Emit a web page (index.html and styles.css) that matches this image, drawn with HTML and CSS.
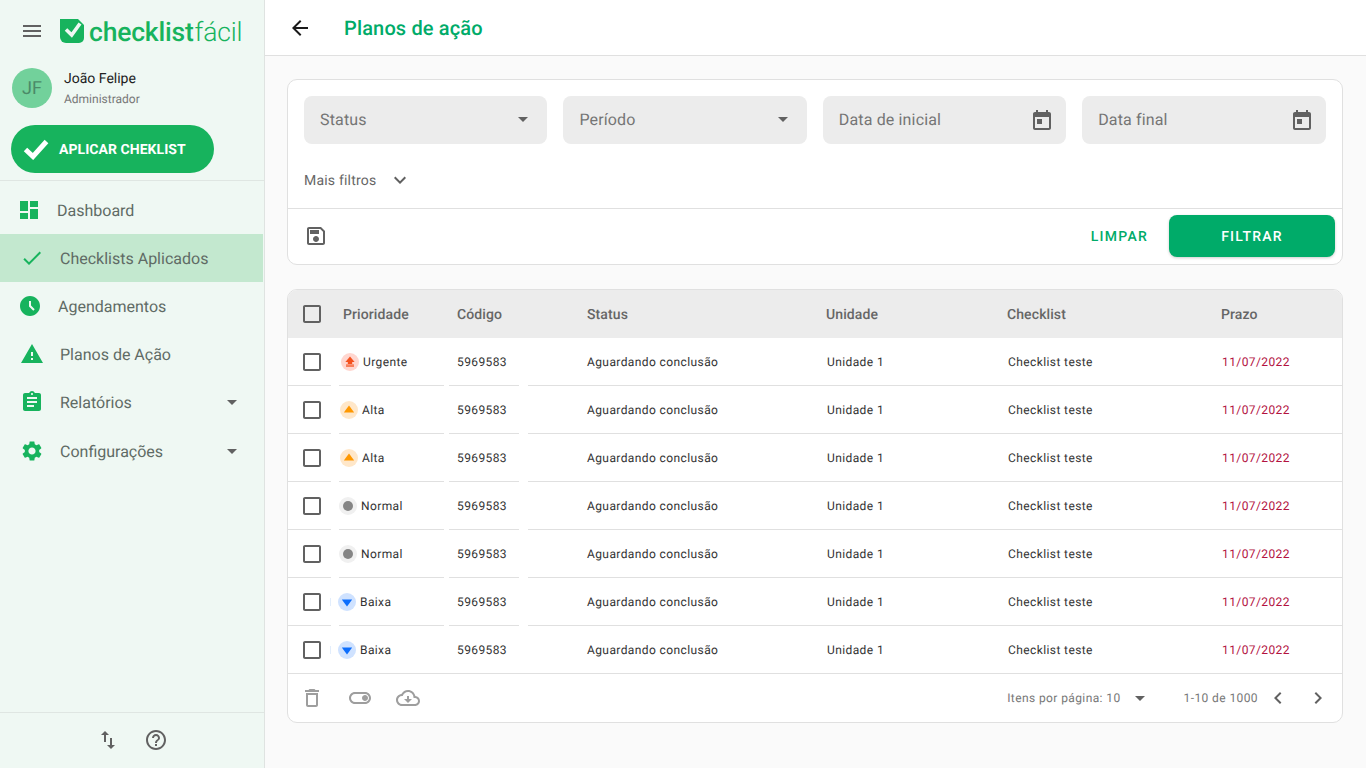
FILE: index.html
```html
<!DOCTYPE html>
<html lang="pt-BR">
<head>
<meta charset="utf-8">
<title>Planos de ação</title>
<link rel="stylesheet" href="styles.css">
</head>
<body>
<svg class="defs" aria-hidden="true">
  <symbol id="i-menu" viewBox="0 0 24 24"><path d="M3 18h18v-2H3v2zm0-5h18v-2H3v2zm0-7v2h18V6H3z"/></symbol>
  <symbol id="i-dash" viewBox="0 0 24 24"><path d="M3 13h8V3H3v10zm0 8h8v-6H3v6zm10 0h8V11h-8v10zm0-18v6h8V3h-8z"/></symbol>
  <symbol id="i-done" viewBox="0 0 24 24"><path d="M9 16.2L4.8 12l-1.4 1.4L9 19 21 7l-1.4-1.4L9 16.2z"/></symbol>
  <symbol id="i-clock" viewBox="0 0 24 24"><path d="M11.99 2C6.47 2 2 6.48 2 12s4.47 10 9.99 10C17.52 22 22 17.52 22 12S17.52 2 11.99 2zm3.3 14.71L11 12.41V7h2v4.59l3.71 3.71-1.42 1.41z"/></symbol>
  <symbol id="i-warn" viewBox="0 0 24 24"><path d="M1 21h22L12 2 1 21zm12-3h-2v-2h2v2zm0-4h-2v-4h2v4z"/></symbol>
  <symbol id="i-assign" viewBox="0 0 24 24"><path d="M19 3h-4.18C14.4 1.84 13.3 1 12 1c-1.3 0-2.4.84-2.82 2H5c-1.1 0-2 .9-2 2v14c0 1.1.9 2 2 2h14c1.1 0 2-.9 2-2V5c0-1.1-.9-2-2-2zm-7 0c.55 0 1 .45 1 1s-.45 1-1 1-1-.45-1-1 .45-1 1-1zm2 14H7v-2h7v2zm3-4H7v-2h10v2zm0-4H7V7h10v2z"/></symbol>
  <symbol id="i-gear" viewBox="0 0 24 24"><path d="M19.14 12.94c.04-.3.06-.61.06-.94 0-.32-.02-.64-.07-.94l2.03-1.58c.18-.14.23-.41.12-.61l-1.92-3.32c-.12-.22-.37-.29-.59-.22l-2.39.96c-.5-.38-1.03-.7-1.62-.94l-.36-2.54c-.04-.24-.24-.41-.48-.41h-3.84c-.24 0-.43.17-.47.41l-.36 2.54c-.59.24-1.13.57-1.62.94l-2.39-.96c-.22-.08-.47 0-.59.22L2.74 8.87c-.12.21-.08.47.12.61l2.03 1.58c-.05.3-.09.63-.09.94s.02.64.07.94l-2.03 1.58c-.18.14-.23.41-.12.61l1.92 3.32c.12.22.37.29.59.22l2.39-.96c.5.38 1.03.7 1.62.94l.36 2.54c.05.24.24.41.48.41h3.84c.24 0 .44-.17.47-.41l.36-2.54c.59-.24 1.13-.56 1.62-.94l2.39.96c.22.08.47 0 .59-.22l1.92-3.32c.12-.22.07-.47-.12-.61l-2.01-1.58zM12 15.6c-1.98 0-3.6-1.62-3.6-3.6s1.62-3.6 3.6-3.6 3.6 1.62 3.6 3.6-1.62 3.6-3.6 3.6z"/></symbol>
  <symbol id="i-caret" viewBox="0 0 24 24"><path d="M7 10l5 5 5-5z"/></symbol>
  <symbol id="i-back" viewBox="0 0 24 24"><path d="M20 11H7.83l5.59-5.59L12 4l-8 8 8 8 1.41-1.41L7.83 13H20v-2z"/></symbol>
  <symbol id="i-event" viewBox="0 0 24 24"><path d="M19 3h-1V1h-2v2H8V1H6v2H5c-1.11 0-1.99.9-1.99 2L3 19c0 1.1.89 2 2 2h14c1.1 0 2-.9 2-2V5c0-1.1-.9-2-2-2zm0 16H5V8h14v11zM7 10h5v5H7z"/></symbol>
  <symbol id="i-save" viewBox="0 0 24 24"><path d="M17 3H5c-1.11 0-2 .9-2 2v14c0 1.1.89 2 2 2h14c1.1 0 2-.9 2-2V7l-4-4zm2 16H5V5h11.17L19 7.83V19zm-7-7c-1.66 0-3 1.34-3 3s1.34 3 3 3 3-1.34 3-3-1.34-3-3-3zM6 6h9v4H6z"/></symbol>
  <symbol id="i-more" viewBox="0 0 24 24"><path d="M16.59 8.59L12 13.17 7.41 8.59 6 10l6 6 6-6z"/></symbol>
  <symbol id="i-box" viewBox="0 0 24 24"><path d="M19 5v14H5V5h14m0-2H5c-1.1 0-2 .9-2 2v14c0 1.1.9 2 2 2h14c1.1 0 2-.9 2-2V5c0-1.1-.9-2-2-2z"/></symbol>
  <symbol id="i-trash" viewBox="0 0 24 24"><path d="M6 19c0 1.1.9 2 2 2h8c1.1 0 2-.9 2-2V7H6v12zM8 9h8v10H8V9zm7.5-5l-1-1h-5l-1 1H5v2h14V4z"/></symbol>
  <symbol id="i-toggle" viewBox="0 0 24 24"><path d="M17 6H7c-3.31 0-6 2.69-6 6s2.69 6 6 6h10c3.31 0 6-2.69 6-6s-2.69-6-6-6zm0 10H7c-2.21 0-4-1.79-4-4s1.79-4 4-4h10c2.21 0 4 1.79 4 4s-1.79 4-4 4zm0-7c-1.66 0-3 1.34-3 3s1.34 3 3 3 3-1.34 3-3-1.34-3-3-3z"/></symbol>
  <symbol id="i-cloud" viewBox="0 0 24 24"><path d="M19.35 10.04C18.67 6.59 15.64 4 12 4 9.11 4 6.6 5.64 5.35 8.04 2.34 8.36 0 10.91 0 14c0 3.31 2.69 6 6 6h13c2.76 0 5-2.24 5-5 0-2.64-2.05-4.78-4.65-4.96zM19 18H6c-2.21 0-4-1.79-4-4s1.79-4 4-4h.71C7.37 7.69 9.48 6 12 6c3.04 0 5.5 2.46 5.5 5.5v.5H19c1.66 0 3 1.34 3 3s-1.34 3-3 3z"/><path d="M13 10h-2v3H8l4 4 4-4h-3z"/></symbol>
  <symbol id="i-prev" viewBox="0 0 24 24"><path d="M15.41 7.41L14 6l-6 6 6 6 1.41-1.41L10.83 12z"/></symbol>
  <symbol id="i-next" viewBox="0 0 24 24"><path d="M10 6L8.59 7.41 13.17 12l-4.58 4.59L10 18l6-6z"/></symbol>
  <symbol id="i-swap" viewBox="0 0 24 24"><path d="M16 17.01V10h-2v7.01h-3L15 21l4-3.99h-3zM9 3L5 6.99h3V14h2V6.99h3L9 3z"/></symbol>
  <symbol id="i-help" viewBox="0 0 24 24"><path d="M11 18h2v-2h-2v2zm1-16C6.48 2 2 6.48 2 12s4.48 10 10 10 10-4.48 10-10S17.52 2 12 2zm0 18c-4.41 0-8-3.59-8-8s3.59-8 8-8 8 3.59 8 8-3.59 8-8 8zm0-14c-2.21 0-4 1.79-4 4h2c0-1.1.9-2 2-2s2 .9 2 2c0 2-3 1.75-3 5h2c0-2.25 3-2.5 3-5 0-2.21-1.79-4-4-4z"/></symbol>
  <symbol id="i-up2" viewBox="0 0 14 14"><path d="M7 1.5L2.4 7h9.2z"/><path d="M4.8 7h4.4v2H4.8z"/><path d="M3 9.2h8v2.8H3z" opacity=".65"/></symbol>
  <symbol id="i-up" viewBox="0 0 14 14"><path d="M7 2.5L1.8 9.5h10.4z"/></symbol>
  <symbol id="i-down" viewBox="0 0 14 14"><path d="M7 11.5L1.8 4.5h10.4z"/></symbol>
  <symbol id="i-dot" viewBox="0 0 14 14"><circle cx="7" cy="7" r="5"/></symbol>
</svg>

<div class="app">
  <aside class="sidebar">
    <div class="brand">
      <svg class="icon ic-dark"><use href="#i-menu"/></svg>
      <svg class="logo-mark" viewBox="0 0 24 24">
        <path class="logo-box" d="M0 0H18L24 6V19A5 5 0 0 1 19 24H6A6 6 0 0 1 0 18Z"/>
        <path class="logo-check" d="M6 10.5L11.7 16L20 4.5"/>
      </svg>
      <span class="logo-text"><b>checklist</b><i>fácil</i></span>
    </div>
    <div class="user">
      <div class="avatar">JF</div>
      <div class="user-info">
        <div class="user-name">João Felipe</div>
        <div class="user-role">Administrador</div>
      </div>
    </div>
    <button class="apply">
      <svg class="apply-check" viewBox="0 0 26 22"><path d="M2.5 11.5L10 18.5L23.5 3.5"/></svg>
      <span>APLICAR CHEKLIST</span>
    </button>
    <nav class="nav">
      <a class="nav-item pad17"><svg class="icon ic-green"><use href="#i-dash"/></svg>Dashboard</a>
      <a class="nav-item active"><svg class="icon ic-green"><use href="#i-done"/></svg>Checklists Aplicados</a>
      <a class="nav-item pad18"><svg class="icon ic-green"><use href="#i-clock"/></svg>Agendamentos</a>
      <a class="nav-item"><svg class="icon ic-green"><use href="#i-warn"/></svg>Planos de Ação</a>
      <a class="nav-item"><svg class="icon ic-green"><use href="#i-assign"/></svg>Relatórios<svg class="icon ic-dark nav-caret"><use href="#i-caret"/></svg></a>
      <a class="nav-item nudge"><svg class="icon ic-green"><use href="#i-gear"/></svg>Configurações<svg class="icon ic-dark nav-caret"><use href="#i-caret"/></svg></a>
    </nav>
    <div class="side-foot">
      <svg class="icon ic-dark"><use href="#i-swap"/></svg>
      <svg class="icon ic-dark"><use href="#i-help"/></svg>
    </div>
  </aside>

  <main class="main">
    <header class="topbar">
      <svg class="icon ic-black"><use href="#i-back"/></svg>
      <h1 class="title">Planos de ação</h1>
    </header>
    <div class="content">
      <section class="card filters">
        <div class="field-grid">
          <div class="field"><span>Status</span><svg class="icon ic-dark up1"><use href="#i-caret"/></svg></div>
          <div class="field"><span>Período</span><svg class="icon ic-dark up1"><use href="#i-caret"/></svg></div>
          <div class="field"><span>Data de inicial</span><svg class="icon ic-dark down1"><use href="#i-event"/></svg></div>
          <div class="field"><span>Data final</span><svg class="icon ic-dark down1"><use href="#i-event"/></svg></div>
        </div>
        <div class="more"><span>Mais filtros</span><svg class="icon ic-dark"><use href="#i-more"/></svg></div>
        <div class="filter-foot">
          <svg class="icon ic-dark"><use href="#i-save"/></svg>
          <span class="clear">LIMPAR</span>
          <button class="submit">FILTRAR</button>
        </div>
      </section>

      <section class="card table">
        <div class="thead">
          <svg class="icon ic-dark"><use href="#i-box"/></svg>
          <span class="th-pri">Prioridade</span>
          <span class="th-cod">Código</span>
          <span class="th-sta">Status</span>
          <span class="th-uni">Unidade</span>
          <span class="th-che">Checklist</span>
          <span>Prazo</span>
        </div>

        <div class="row">
          <div class="cell c-box"><svg class="icon ic-dark"><use href="#i-box"/></svg></div>
          <div class="cell c-pri"><span class="badge urgent"><svg><use href="#i-up2"/></svg></span>Urgente</div>
          <div class="cell c-cod">5969583</div>
          <div class="cell c-rest"><span class="c-sta">Aguardando conclusão</span><span class="c-uni">Unidade 1</span><span class="c-che">Checklist teste</span><span class="c-date">11/07/2022</span></div>
        </div>
        <div class="row">
          <div class="cell c-box"><svg class="icon ic-dark"><use href="#i-box"/></svg></div>
          <div class="cell c-pri"><span class="badge high"><svg><use href="#i-up"/></svg></span>Alta</div>
          <div class="cell c-cod">5969583</div>
          <div class="cell c-rest"><span class="c-sta">Aguardando conclusão</span><span class="c-uni">Unidade 1</span><span class="c-che">Checklist teste</span><span class="c-date">11/07/2022</span></div>
        </div>
        <div class="row">
          <div class="cell c-box"><svg class="icon ic-dark"><use href="#i-box"/></svg></div>
          <div class="cell c-pri"><span class="badge high"><svg><use href="#i-up"/></svg></span>Alta</div>
          <div class="cell c-cod">5969583</div>
          <div class="cell c-rest"><span class="c-sta">Aguardando conclusão</span><span class="c-uni">Unidade 1</span><span class="c-che">Checklist teste</span><span class="c-date">11/07/2022</span></div>
        </div>
        <div class="row">
          <div class="cell c-box"><svg class="icon ic-dark"><use href="#i-box"/></svg></div>
          <div class="cell c-pri"><span class="badge normal"><svg><use href="#i-dot"/></svg></span>Normal</div>
          <div class="cell c-cod">5969583</div>
          <div class="cell c-rest"><span class="c-sta">Aguardando conclusão</span><span class="c-uni">Unidade 1</span><span class="c-che">Checklist teste</span><span class="c-date">11/07/2022</span></div>
        </div>
        <div class="row">
          <div class="cell c-box"><svg class="icon ic-dark"><use href="#i-box"/></svg></div>
          <div class="cell c-pri"><span class="badge normal"><svg><use href="#i-dot"/></svg></span>Normal</div>
          <div class="cell c-cod">5969583</div>
          <div class="cell c-rest"><span class="c-sta">Aguardando conclusão</span><span class="c-uni">Unidade 1</span><span class="c-che">Checklist teste</span><span class="c-date">11/07/2022</span></div>
        </div>
        <div class="row">
          <div class="cell c-box"><svg class="icon ic-dark"><use href="#i-box"/></svg></div>
          <div class="cell c-pri"><span class="badge low"><svg><use href="#i-down"/></svg></span>Baixa</div>
          <div class="cell c-cod">5969583</div>
          <div class="cell c-rest"><span class="c-sta">Aguardando conclusão</span><span class="c-uni">Unidade 1</span><span class="c-che">Checklist teste</span><span class="c-date">11/07/2022</span></div>
        </div>
        <div class="row last">
          <div class="cell c-box"><svg class="icon ic-dark"><use href="#i-box"/></svg></div>
          <div class="cell c-pri"><span class="badge low"><svg><use href="#i-down"/></svg></span>Baixa</div>
          <div class="cell c-cod">5969583</div>
          <div class="cell c-rest"><span class="c-sta">Aguardando conclusão</span><span class="c-uni">Unidade 1</span><span class="c-che">Checklist teste</span><span class="c-date">11/07/2022</span></div>
        </div>

        <div class="tfoot">
          <svg class="icon ic-light"><use href="#i-trash"/></svg>
          <svg class="icon ic-light"><use href="#i-toggle"/></svg>
          <svg class="icon ic-light"><use href="#i-cloud"/></svg>
          <div class="pager">
            <span>Itens por página: 10</span>
            <svg class="icon ic-dark"><use href="#i-caret"/></svg>
            <span class="range">1-10 de 1000</span>
            <svg class="icon ic-dark"><use href="#i-prev"/></svg>
            <svg class="icon ic-dark"><use href="#i-next"/></svg>
          </div>
        </div>
      </section>
    </div>
  </main>
</div>
</body>
</html>
```

FILE: styles.css
```css
* { box-sizing: border-box; }
html, body { margin: 0; height: 100%; }
body {
  font-family: Roboto, "Liberation Sans", sans-serif;
  background: #fafafa;
  color: #333;
  overflow: hidden;
  text-rendering: geometricPrecision;
}
.defs { width: 0; height: 0; display: block; }
.app { display: flex; width: 1366px; height: 768px; }

.icon { width: 24px; height: 24px; flex: none; display: block; }
.ic-green { fill: #17b35d; }
.ic-dark { fill: #616161; }
.ic-black { fill: #1a1a1a; }
.ic-light { fill: #9e9e9e; }

/* Sidebar */
.sidebar {
  width: 265px;
  flex: none;
  height: 768px;
  display: flex;
  flex-direction: column;
  background: #eff8f3;
  border-right: 1px solid #dfe3e1;
  padding-right: 1px;
}
.brand {
  display: flex;
  align-items: center;
  height: 62px;
  padding-left: 20px;
  flex: none;
}
.logo-mark { width: 24px; height: 24px; margin-left: 16px; flex: none; }
.logo-box { fill: #17b35d; }
.logo-check { fill: none; stroke: #eff8f3; stroke-width: 3.6; }
.logo-text {
  margin-left: 5px;
  padding-top: 4px;
  font-size: 26.5px;
  line-height: 24px;
  color: #17b35d;
  letter-spacing: -0.2px;
  white-space: nowrap;
}
.logo-text b { font-weight: 500; }
.logo-text i { font-style: normal; font-weight: 300; margin-left: 1px; }

.user {
  display: flex;
  align-items: flex-start;
  padding: 6px 0 0 12px;
  height: 63px;
  flex: none;
}
.avatar {
  width: 40px;
  height: 40px;
  border-radius: 50%;
  background: #72d19b;
  color: #4b8a68;
  font-size: 18px;
  display: flex;
  align-items: center;
  justify-content: center;
}
.user-info { margin-left: 12px; }
.user-name { font-size: 14px; line-height: 20px; color: #212121; margin-top: 1px; }
.user-role { font-size: 12px; line-height: 16px; margin-top: 2px; color: #777; }

.apply {
  margin-left: 11px;
  width: 203px;
  height: 48px;
  flex: none;
  border: 0;
  border-radius: 24px;
  background: #17b35d;
  color: #fff;
  font: 700 14px Roboto, sans-serif;
  letter-spacing: 0.05px;
  display: flex;
  align-items: center;
  gap: 10px;
  padding: 0 0 0 12px;
  text-rendering: geometricPrecision;
}
.apply span { padding-top: 2px; }
.apply-check { width: 26px; height: 22px; flex: none; }
.apply-check path { fill: none; stroke: #fff; stroke-width: 5; }

.nav {
  margin-top: 7px;
  padding-top: 5px;
  border-top: 1px solid #dfe6e2;
  flex: 1;
  margin-right: -1px;
}
.nav-item {
  display: flex;
  align-items: center;
  gap: 16px;
  height: 48px;
  padding-left: 20px;
  margin-right: 1px;
  font-size: 16px;
  color: #5f6b65;
}
.nav-item.pad17 { padding-left: 17px; }
.nav-item.pad18 { padding-left: 18px; }
.nav-item.active { background: #c3e8cf; }
.nav-item.nudge { margin-top: 1px; }
.nav-caret { margin-left: auto; margin-right: 19px; }

.side-foot {
  height: 56px;
  flex: none;
  margin-right: -1px;
  border-top: 1px solid #dfe6e2;
  display: flex;
  align-items: center;
  justify-content: center;
  gap: 24px;
  padding: 0 1px 1px 0;
}

/* Main */
.main { flex: 1; min-width: 0; display: flex; flex-direction: column; }
.topbar {
  height: 56px;
  flex: none;
  background: #fff;
  border-bottom: 1px solid #e0e0e0;
  display: flex;
  align-items: center;
  gap: 32px;
  padding-left: 23px;
}
.title { margin: 0; font-size: 20px; font-weight: 500; color: #00ab69; letter-spacing: 0.15px; }
.content { padding: 23px 23px 0 22px; display: flex; flex-direction: column; gap: 24px; }
.card { background: #fff; border: 1px solid #e0e0e0; border-radius: 10px; overflow: hidden; }

/* Filters */
.filters { height: 186px; }
.field-grid {
  display: grid;
  grid-template-columns: repeat(4, 243.4px);
  gap: 16px;
  padding: 16px 16px 0;
}
.field {
  height: 48px;
  background: #ececec;
  border-radius: 8px;
  display: flex;
  align-items: center;
  justify-content: space-between;
  padding: 0 12px 0 16px;
  font-size: 16px;
  letter-spacing: 0.15px;
  color: #757575;
}
.field span { margin-bottom: 2px; }
.field .up1 { margin-bottom: 2px; }
.field .down1 { margin-top: 2px; }
.more {
  display: flex;
  align-items: center;
  height: 56px;
  margin: 8px 0 0 16px;
  gap: 12px;
  font-size: 14px;
  letter-spacing: 0.2px;
  color: #666;
}
.more span { padding-top: 2px; }
.filter-foot {
  height: 56px;
  border-top: 1px solid #e0e0e0;
  display: flex;
  align-items: center;
  padding: 0 7px 1px 16px;
}
.clear {
  margin-left: auto;
  padding-top: 2px;
  font-size: 14px;
  font-weight: 500;
  letter-spacing: 1.25px;
  color: #00ab69;
}
.submit {
  margin-left: 21px;
  width: 166px;
  height: 42px;
  border: 0;
  padding: 2px 0 0;
  border-radius: 8px;
  background: #00ab69;
  color: #fff;
  font: 500 14px Roboto, sans-serif;
  letter-spacing: 1.25px;
  box-shadow: 0 1px 3px rgba(0, 0, 0, .2);
  text-rendering: geometricPrecision;
}

/* Table */
.table { height: 434px; }
.thead {
  height: 48px;
  background: #ececec;
  display: flex;
  align-items: center;
  padding-left: 12px;
  font-size: 14px;
  font-weight: 500;
  color: #666;
  letter-spacing: 0.1px;
}
.thead span { padding-top: 2px; }
.th-pri { margin-left: 19px; width: 114px; }
.th-cod { width: 130px; }
.th-sta { width: 239px; }
.th-uni { width: 181px; }
.th-che { width: 214px; }

.row { display: flex; height: 48px; font-size: 12px; letter-spacing: 0.4px; color: #333; }
.cell {
  display: flex;
  align-items: center;
  border-bottom: 1px solid #e0e0e0;
  position: relative;
}
.c-box { width: 43px; padding-left: 12px; margin-right: 8px; }
.c-pri { width: 105px; margin-right: 5px; }
.c-cod { width: 70px; padding-left: 8px; margin-right: 9px; }
.c-rest { flex: 1; padding-left: 59px; }
.row.last { box-shadow: inset 0 -1px 0 #e0e0e0; }
.row.last .cell { border-bottom-color: transparent; }
.c-sta { width: 240px; }
.c-uni { width: 181px; }
.c-che { width: 214px; }
.c-date { color: #b3123f; }

.badge {
  width: 18px;
  height: 18px;
  border-radius: 50%;
  display: flex;
  align-items: center;
  justify-content: center;
  margin-right: 4px;
  flex: none;
}
.badge svg { width: 14px; height: 14px; display: block; }
.urgent { margin-left: 2px; background: #ffd6cf; fill: #f4511e; }
.high { margin-left: 1px; background: #ffe7c9; fill: #ff9800; }
.normal { background: #f0f0f0; fill: #858585; }
.low { margin-left: -1px; background: #cfe2ff; fill: #0d6efd; }
.low::before {
  content: "";
  position: absolute;
  left: -9px;
  top: 20px;
  width: 1px;
  height: 8px;
  background: #e3eefc;
}

.tfoot {
  height: 48px;
  display: flex;
  align-items: center;
  gap: 24px;
  padding: 0 12px;
}
.pager {
  margin-left: auto;
  display: flex;
  align-items: center;
  font-size: 12px;
  letter-spacing: 0.4px;
  color: #777;
}
.pager .icon:nth-of-type(1) { margin: 0 32px 0 7px; }
.pager .icon:nth-of-type(2) { margin-left: 8px; }
.pager .icon:nth-of-type(3) { margin-left: 16px; }
```
